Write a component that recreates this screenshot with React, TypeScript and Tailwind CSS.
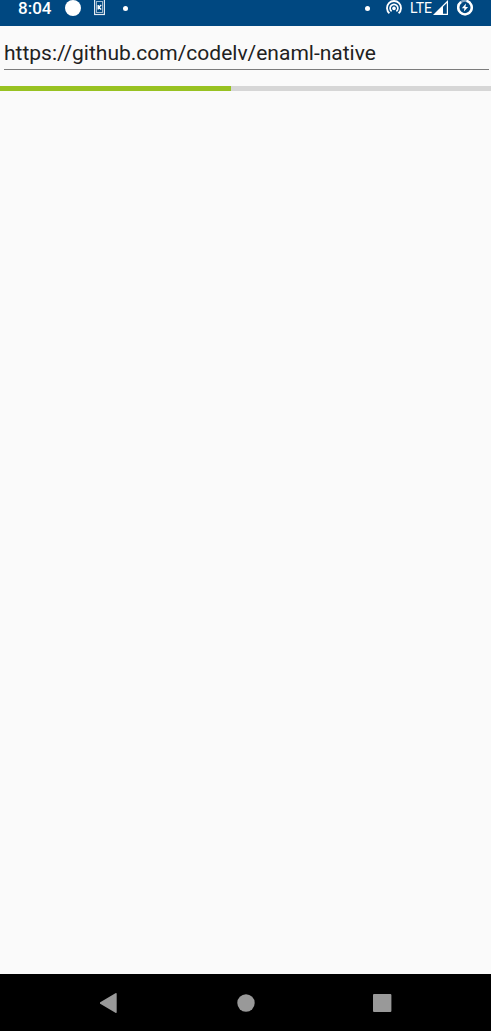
import { ReactNode, useState } from "react";

const Dot = () => <span className="h-[5px] w-[5px] rounded-full bg-white" />;

const SimIcon = () => (
  <svg width="11" height="16" viewBox="0 0 11 16" fill="none">
    <rect x="0.6" y="-1" width="9.8" height="15.5" stroke="#e3ebf2" strokeWidth="1.2" />
    <rect x="2.5" y="1.5" width="6" height="11" stroke="#9db8cf" />
    <path d="M4.2 5v4.4M7.2 5L4.8 7.2L7.2 9.4" stroke="white" strokeWidth="1.4" />
  </svg>
);

const HotspotIcon = () => (
  <svg width="16" height="16" viewBox="0 0 16 16" fill="none" stroke="white">
    <path d="M3.4 13.3A7 7 0 1 1 12.6 13.3" strokeWidth="1.8" />
    <path d="M5.6 11.3A3.9 3.9 0 1 1 10.4 11.3" strokeWidth="1.7" />
    <circle cx="8" cy="8.4" r="1.8" fill="white" stroke="none" />
  </svg>
);

const SignalIcon = () => (
  <svg width="15" height="16" viewBox="0 0 15 16">
    <path d="M0 15L15 0V15Z" fill="white" />
    <path d="M10 6.8L13.8 3V13.8H10Z" fill="#004881" />
  </svg>
);

const BatteryIcon = () => (
  <svg width="16" height="16" viewBox="0 0 16 16" fill="none">
    <circle cx="8" cy="7.5" r="6.8" stroke="#7fa3c1" strokeWidth="2.2" />
    <path d="M9.5 0.9A6.8 6.8 0 1 1 4 2" stroke="white" strokeWidth="2.4" />
    <path d="M9 3.6L4.8 8.2H7.4L6.9 11.5L11.1 6.9H8.5Z" fill="white" />
  </svg>
);

const StatusBar = () => (
  <header className="flex h-[26px] items-start justify-between bg-[#004881] px-[18px] text-white">
    <div className="flex h-4 items-center">
      <time className="w-[47px] text-[17px] leading-4 font-medium">8:04</time>
      <span className="mr-[13px] h-4 w-4 rounded-full bg-white" />
      <SimIcon />
      <span className="w-[18px]" />
      <Dot />
    </div>
    <div className="flex h-4 items-center">
      <Dot />
      <span className="w-4" />
      <HotspotIcon />
      <span className="mr-px ml-2 w-[22px] text-sm leading-4">LTE</span>
      <SignalIcon />
      <span className="w-[9px]" />
      <BatteryIcon />
    </div>
  </header>
);

const NavButton = ({ label, children }: { label: string; children: ReactNode }) => (
  <button
    type="button"
    aria-label={label}
    className="flex h-full w-[136px] items-center justify-center"
  >
    <svg width="20" height="20" viewBox="0 0 20 20" fill="#999999">
      {children}
    </svg>
  </button>
);

const NavigationBar = () => (
  <nav className="flex h-[57px] items-center justify-center bg-black">
    <NavButton label="Back">
      <path d="M0.2 9.3L15.4 0.3Q16.7 -0.3 16.7 1V19Q16.7 20.3 15.4 19.7L0.2 10.7Q-0.6 10 0.2 9.3Z" />
    </NavButton>
    <NavButton label="Home">
      <circle cx="10" cy="10" r="8.7" />
    </NavButton>
    <NavButton label="Recent apps">
      <rect x="1" y="1" width="18.4" height="18" rx="1" />
    </NavButton>
  </nav>
);

const App = () => {
  const [url, setUrl] = useState("https://github.com/codelv/enaml-native");
  const progress = 47;

  return (
    <div className="flex min-h-screen flex-col bg-[#fafafa] font-['Roboto',sans-serif]">
      <StatusBar />

      {/* Address */}
      <div className="pt-3 pr-[2px] pl-1">
        <input
          type="text"
          aria-label="Address"
          value={url}
          spellCheck={false}
          onChange={(e) => setUrl(e.target.value)}
          className="block h-8 w-full border-b border-[#7c7c7c] pb-[2px] text-[21px] leading-7 text-[#212121] outline-none"
        />
      </div>

      {/* Loading progress */}
      <div
        role="progressbar"
        aria-label="Page loading"
        aria-valuenow={progress}
        aria-valuemin={0}
        aria-valuemax={100}
        className="mt-4 h-[5px] bg-[#d6d6d6]"
      >
        <div className="h-full bg-[#98c222]" style={{ width: `${progress}%` }} />
      </div>

      <main className="flex-1" />

      <NavigationBar />
    </div>
  );
};

export default App;
